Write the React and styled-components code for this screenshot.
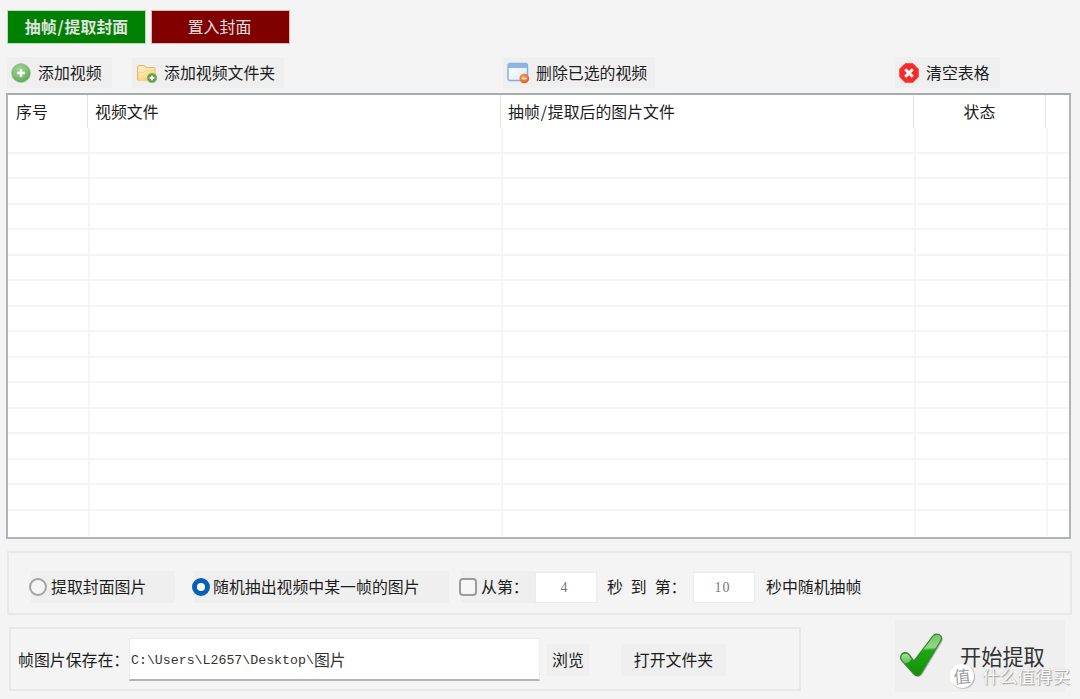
import React from "react";
import styled, { createGlobalStyle, css } from "styled-components";

const GlobalStyle = createGlobalStyle`
  * { box-sizing: border-box; }
  body {
    margin: 0;
    background: #f4f4f4;
    color: #1c1c1c;
    font-family: "Noto Sans CJK SC", sans-serif;
    font-size: 15.9px;
    line-height: 20px;
    overflow: hidden;
  }
`;

const Window = styled.main`
  position: relative;
  width: 1080px;
  height: 699px;
  padding: 11px 8px 0 7px;
  background: #f4f4f4;
  white-space: nowrap;
`;

const Tabs = styled.nav`
  display: flex;
  gap: 7px;
  padding-left: 1px;
`;

const Tab = styled.button`
  width: 137px;
  height: 32px;
  padding: 0 ${(p) => (p.$active ? 0 : 2)}px 0 0;
  border: 0;
  outline: 1px solid ${(p) => (p.$active ? "#b9dcb9" : "#dcb9b9")};
  background: ${(p) => (p.$active ? "#008000" : "#800000")};
  color: #e2e2e2;
  font: inherit;
  font-weight: ${(p) => (p.$active ? 700 : 400)};
`;

const Slash = styled.span`
  display: inline-block;
  width: 8px;
  text-align: center;
`;

const Toolbar = styled.div`
  display: flex;
  height: 31px;
  margin-top: 14px;
`;

const buttonFace = css`
  display: flex;
  align-items: center;
  border: 0;
  background: #efefef;
  color: inherit;
  font: inherit;
`;

const ToolButton = styled.button`
  ${buttonFace}
  width: ${(p) => p.$width}px;
  margin-left: ${(p) => p.$gap || 0}px;
  padding: 0 0 0 4px;
  gap: ${(p) => p.$space || 7}px;
  svg { flex: none; }
`;

const Table = styled.section`
  display: flex;
  flex-direction: column;
  width: 1065px;
  height: 446px;
  margin: 5px 0 0 -1px;
  border: 2px solid #b0b4b9;
  border-top-color: #a6abb0;
  background: #fff;
`;

const HeadRow = styled.div`
  display: grid;
  grid-template-columns: 80px 413px 413px 132px 1fr;
  height: 33px;
  flex: none;
`;

const HeadCell = styled.div`
  padding: 7px 0 0 ${(p) => (p.$center ? 0 : p.$pad || 7)}px;
  border-right: ${(p) => (p.$last ? 0 : 1)}px solid #e4e4e4;
  text-align: ${(p) => (p.$center ? "center" : "left")};
`;

const Body = styled.div`
  flex: 1;
  display: flex;
  flex-direction: column;
  overflow: hidden;
`;

const Row = styled.div`
  display: grid;
  grid-template-columns: 82px 413px 413px 132px 1fr;
  flex: none;
  height: 25.5px;
  border-bottom: ${(p) => (p.$last ? 0 : 2)}px solid #f4f4f4;
`;

const Cell = styled.div`
  border-right: 2px solid #f5f5f5;
  &:last-child { border-right: 0; }
`;

const Panel = styled.section`
  display: flex;
  align-items: center;
  border: 2px solid #e8e8e8;
`;

const Options = styled(Panel)`
  width: 1065px;
  height: 64px;
  margin: 12px 0 0 0;
  padding: 8px 0 0 20px;
`;

const Choice = styled.label`
  display: flex;
  align-items: center;
  width: ${(p) => p.$width}px;
  height: 32px;
  margin-right: ${(p) => p.$after || 0}px;
  gap: ${(p) => p.$space || 3}px;
  background: linear-gradient(90deg, transparent 2px, #efefef 2px);
`;

const Radio = styled.span`
  flex: none;
  width: 18px;
  height: 18px;
  border: ${(p) => (p.$on ? "5.5px solid #0561b8" : "2px solid #a2a2a2")};
  border-radius: 50%;
  background: ${(p) => (p.$on ? "#fff" : "#f5f5f5")};
`;

const Check = styled.span`
  flex: none;
  width: 18px;
  height: 18px;
  border: 2px solid #9c9c9c;
  border-radius: 4px;
  background: #f6f6f6;
`;

const NumberBox = styled.span`
  width: 62px;
  height: 31px;
  border: 1px solid #ebebeb;
  background: #fff;
  color: #777;
  font: 14px/30px "Liberation Serif", serif;
  letter-spacing: 1px;
  padding-right: 3px;
  text-align: center;
`;

const Between = styled.span`
  width: 73px;
  margin: 0 13px 0 10px;
  word-spacing: 4.4px;
`;

const Tail = styled.span`
  margin-left: 11px;
`;

const Footer = styled.div`
  display: flex;
  align-items: flex-start;
  margin-top: 5px;
`;

const SavePanel = styled(Panel)`
  width: 792px;
  height: 64px;
  margin: 7px 0 0 2px;
  padding: 1px 0 0 7px;
`;

const SaveLabel = styled.span`
  width: 111px;
`;

const PathBox = styled.div`
  display: flex;
  align-items: center;
  width: 411px;
  height: 43px;
  border: 1px solid #ececec;
  border-bottom: 2px solid #b3b3b3;
  padding: 1px 0 0 1px;
  background: #fff;
  color: #333;
`;

const PathLatin = styled.span`
  font: 13.25px/20px "Liberation Mono", monospace;
  padding-top: 3px;
`;

const PlainButton = styled.button`
  ${buttonFace}
  justify-content: center;
  width: ${(p) => p.$width}px;
  height: 32px;
  margin-left: ${(p) => p.$gap}px;
  padding: 0;
`;

const StartButton = styled.button`
  ${buttonFace}
  width: 170px;
  height: 72px;
  margin-left: 94px;
  padding: 0 0 0 4px;
  gap: 15px;
  font-size: 21.2px;
  line-height: 26px;
  color: #333;
`;

const StartLabel = styled.span`
  padding-bottom: 1px;
`;

const Watermark = styled.div`
  position: absolute;
  right: 10px;
  top: 663px;
  display: flex;
  align-items: center;
  gap: 8px;
  color: #fff;
  font-size: 17.6px;
  line-height: 26px;
  text-shadow: 1px 1px 1px #9a9a9a, 0 0 1px #aaa;
`;

const Seal = styled.span`
  width: 24px;
  height: 24px;
  border-radius: 50%;
  background: #fff;
  box-shadow: 1px 1px 1px #bbb;
  color: #a0a0a0;
  font-size: 17px;
  line-height: 24px;
  text-align: center;
  text-shadow: none;
  transform: rotate(-6deg);
`;

const AddIcon = () => (
  <svg width="20" height="20" viewBox="0 0 20 20">
    <defs>
      <radialGradient id="add" cx=".4" cy=".3" r=".75">
        <stop offset="0" stopColor="#a5d397" />
        <stop offset=".6" stopColor="#7cbd70" />
        <stop offset="1" stopColor="#55a350" />
      </radialGradient>
    </defs>
    <circle cx="10" cy="10" r="9.3" fill="url(#add)" stroke="#84b97c" strokeWidth=".8" />
    <path d="M10 6.200v7.600M6.200 10h7.600" stroke="#fff" strokeWidth="2.600" />
  </svg>
);

const FolderIcon = () => (
  <svg width="22" height="20" viewBox="0 0 22 20">
    <defs>
      <linearGradient id="folder" x2="1" y2="1">
        <stop stopColor="#fff3c4" />
        <stop offset="1" stopColor="#f4c764" />
      </linearGradient>
    </defs>
    <path d="M1.500 17V3.500q0-1 1-1h6l1.500 2h8q1 0 1 1V17z" fill="#fce7ac" stroke="#e9b868" />
    <path d="M2.500 17V9.500h5l2-2h9.500V17z" fill="url(#folder)" stroke="#f1cf83" strokeWidth=".8" />
    <path d="M4 5.500h3.500" stroke="#fff8d8" strokeWidth="1.300" />
    <circle cx="16" cy="15" r="4.800" fill="#62a344" stroke="#8abb70" strokeWidth=".6" />
    <path d="M16 12.700v4.600M13.700 15h4.600" stroke="#fff" strokeWidth="2" />
  </svg>
);

const RemoveIcon = () => (
  <svg width="23" height="22" viewBox="0 0 23 22">
    <defs>
      <linearGradient id="win" x2="1" y2="1">
        <stop stopColor="#fff" />
        <stop offset="1" stopColor="#dce9f8" />
      </linearGradient>
      <radialGradient id="minus" cx=".4" cy=".35" r=".7">
        <stop stopColor="#f7a25f" />
        <stop offset="1" stopColor="#de5918" />
      </radialGradient>
    </defs>
    <rect x="1" y="1.500" width="19.500" height="17" rx="2" fill="url(#win)" stroke="#86abdb" strokeWidth="1.400" />
    <path d="M1 6V3.500a2 2 0 0 1 2-2h15.500a2 2 0 0 1 2 2V6z" fill="#8db5e6" />
    <circle cx="17.300" cy="16.500" r="4.800" fill="url(#minus)" />
    <path d="M14.700 16.500h5.200" stroke="#ffe6d2" strokeWidth="1.700" />
  </svg>
);

const ClearIcon = () => (
  <svg width="20" height="20" viewBox="0 0 20 20">
    <path d="M6 .7h8L19.300 6v8L14 19.300H6L.7 14V6z" fill="#f52a2a" stroke="#f34343" strokeLinejoin="round" />
    <path d="m6.200 6.200 7.600 7.600m0-7.600-7.600 7.600" stroke="#fff" strokeWidth="3" />
  </svg>
);

const TickIcon = () => (
  <svg width="46" height="46" viewBox="0 0 46 46">
    <defs>
      <linearGradient id="tick" x1="0" y1="0" x2=".08" y2="1">
        <stop stopColor="#6cc35f" />
        <stop offset=".38" stopColor="#92d886" />
        <stop offset=".44" stopColor="#1ca80e" />
        <stop offset="1" stopColor="#109306" />
      </linearGradient>
      <linearGradient id="gloss" x2="0" y2="1">
        <stop stopColor="#c4ebbd" />
        <stop offset="1" stopColor="#6cc55f" />
      </linearGradient>
    </defs>
    <path
      d="M2 22.500c1.500-3.500 6.500-4 8.500-.5l4.300 6.200L33.500 3.500c2-3 6-3.200 8-.8 1.200 1.500 1 3.800-.2 5.800L22 40.500c-2 3-5 3.200-7.200.6L2.700 27.500c-1.200-1.400-1.500-3.200-.7-5z"
      fill="#777"
      opacity=".5"
      transform="translate(1.500 .8)"
    />
    <path
      d="M2 22.500c1.500-3.500 6.500-4 8.500-.5l4.300 6.200L33.500 3.500c2-3 6-3.200 8-.8 1.200 1.500 1 3.800-.2 5.800L22 40.500c-2 3-5 3.200-7.200.6L2.700 27.500c-1.200-1.400-1.500-3.200-.7-5z"
      fill="url(#tick)"
      stroke="#3a8335"
      strokeWidth="1.200"
    />
    <path d="M2.600 23c1.300-2.800 5.600-3.300 7.400-.4l2.400 3.600c-1.500 2.600-4.500 4.500-6.800 4L3.200 27.200c-1-1.200-1.300-2.600-.6-4.200z" fill="url(#gloss)" opacity=".85" />
  </svg>
);

const rows = Array.from({ length: 16 }, (_, i) => i);

export default function App() {
  return (
    <Window>
      <GlobalStyle />
      <Tabs>
        <Tab $active>抽帧<Slash>/</Slash>提取封面</Tab>
        <Tab>置入封面</Tab>
      </Tabs>
      <Toolbar>
        <ToolButton $width={105}><AddIcon />添加视频</ToolButton>
        <ToolButton $width={152} $gap={20} $space={6}><FolderIcon />添加视频文件夹</ToolButton>
        <ToolButton $width={152} $gap={219} $space={6}><RemoveIcon />删除已选的视频</ToolButton>
        <ToolButton $width={105} $gap={240}><ClearIcon />清空表格</ToolButton>
      </Toolbar>
      <Table>
        <HeadRow>
          <HeadCell $pad={8}>序号</HeadCell>
          <HeadCell>视频文件</HeadCell>
          <HeadCell>抽帧<Slash>/</Slash>提取后的图片文件</HeadCell>
          <HeadCell $center>状态</HeadCell>
          <HeadCell $last />
        </HeadRow>
        <Body>
          {rows.map((i) => (
            <Row key={i} $last={i === 15}>
              <Cell /><Cell /><Cell /><Cell /><Cell />
            </Row>
          ))}
        </Body>
      </Table>
      <Options>
        <Choice $width={146} $after={17} $space={4}><Radio />提取封面图片</Choice>
        <Choice $width={257} $after={10}><Radio $on />随机抽出视频中某一帧的图片</Choice>
        <Choice $width={76} $space={4}><Check />从第：</Choice>
        <NumberBox>4</NumberBox>
        <Between>秒 到 第：</Between>
        <NumberBox>10</NumberBox>
        <Tail>秒中随机抽帧</Tail>
      </Options>
      <Footer>
        <SavePanel>
          <SaveLabel>帧图片保存在：</SaveLabel>
          <PathBox>
            <PathLatin>C:\Users\L2657\Desktop\</PathLatin>图片
          </PathBox>
          <PlainButton $width={42} $gap={7}>浏览</PlainButton>
          <PlainButton $width={105} $gap={32}>打开文件夹</PlainButton>
        </SavePanel>
        <StartButton><TickIcon /><StartLabel>开始提取</StartLabel></StartButton>
      </Footer>
      <Watermark><Seal>值</Seal>什么值得买</Watermark>
    </Window>
  );
}
